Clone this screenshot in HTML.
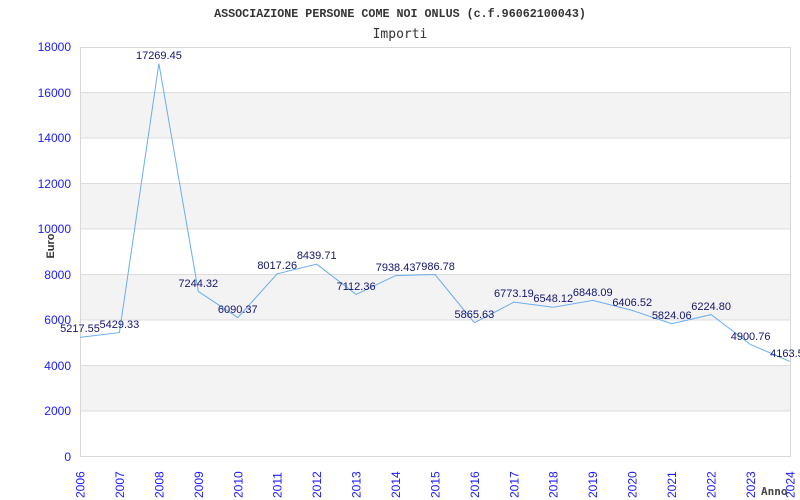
<!DOCTYPE html>
<html><head><meta charset="utf-8"><style>
html,body{margin:0;padding:0;background:#fff;width:800px;height:500px;overflow:hidden}
svg{display:block}
</style></head><body>
<svg width="800" height="500" xmlns="http://www.w3.org/2000/svg">
<rect width="800" height="500" fill="#fff"/>
<text x="400" y="17" text-anchor="middle" font-family="Liberation Mono, monospace" font-weight="bold" font-size="11.7" fill="#333">ASSOCIAZIONE PERSONE COME NOI ONLUS (c.f.96062100043)</text>
<text x="400" y="38" text-anchor="middle" font-family="DejaVu Sans Mono, monospace" font-size="13" fill="#333">Importi</text>
<g fill="#f3f3f3">
<rect x="80" y="92.4" width="710" height="45.5"/>
<rect x="80" y="183.3" width="710" height="45.5"/>
<rect x="80" y="274.2" width="710" height="45.5"/>
<rect x="80" y="365.1" width="710" height="45.5"/>
</g>
<g stroke="#ddd" stroke-width="1">
<line x1="80" y1="92.5" x2="790" y2="92.5"/><line x1="80" y1="138" x2="790" y2="138"/>
<line x1="80" y1="183.5" x2="790" y2="183.5"/><line x1="80" y1="229" x2="790" y2="229"/>
<line x1="80" y1="274.5" x2="790" y2="274.5"/><line x1="80" y1="320" x2="790" y2="320"/>
<line x1="80" y1="365.5" x2="790" y2="365.5"/><line x1="80" y1="411" x2="790" y2="411"/>
</g>
<rect x="80.5" y="47.5" width="710" height="409" fill="none" stroke="#d8d8d8"/>
<g font-family="Liberation Sans, sans-serif" font-size="12" fill="#1a1aff" text-anchor="end">
<text x="71" y="51">18000</text><text x="71" y="97">16000</text><text x="71" y="142">14000</text>
<text x="71" y="188">12000</text><text x="71" y="233">10000</text><text x="71" y="279">8000</text>
<text x="71" y="324">6000</text><text x="71" y="370">4000</text><text x="71" y="415">2000</text>
<text x="71" y="461">0</text>
</g>
<text transform="translate(54,246) rotate(-90)" text-anchor="middle" font-family="Liberation Sans, sans-serif" font-weight="bold" font-size="11" fill="#333">Euro</text>
<g font-family="Liberation Sans, sans-serif" font-size="12" fill="#1a1aff">
<text transform="translate(84.5,498) rotate(-90)">2006</text>
<text transform="translate(123.9,498) rotate(-90)">2007</text>
<text transform="translate(163.4,498) rotate(-90)">2008</text>
<text transform="translate(202.8,498) rotate(-90)">2009</text>
<text transform="translate(242.3,498) rotate(-90)">2010</text>
<text transform="translate(281.7,498) rotate(-90)">2011</text>
<text transform="translate(321.1,498) rotate(-90)">2012</text>
<text transform="translate(360.6,498) rotate(-90)">2013</text>
<text transform="translate(400,498) rotate(-90)">2014</text>
<text transform="translate(439.4,498) rotate(-90)">2015</text>
<text transform="translate(478.9,498) rotate(-90)">2016</text>
<text transform="translate(518.3,498) rotate(-90)">2017</text>
<text transform="translate(557.7,498) rotate(-90)">2018</text>
<text transform="translate(597.2,498) rotate(-90)">2019</text>
<text transform="translate(636.6,498) rotate(-90)">2020</text>
<text transform="translate(676.1,498) rotate(-90)">2021</text>
<text transform="translate(715.5,498) rotate(-90)">2022</text>
<text transform="translate(754.9,498) rotate(-90)">2023</text>
<text transform="translate(794.4,498) rotate(-90)">2024</text>
</g>
<text x="761" y="495" font-family="DejaVu Sans Mono, monospace" font-weight="bold" font-size="11" fill="#444">Anno</text>
<polyline fill="none" stroke="#6aaef0" stroke-width="1" points="80,337.4 119.4,332.6 158.9,63.6 198.3,291.4 237.8,317.6 277.2,273.8 316.7,264.2 356.1,294.4 395.6,275.6 435,274.5 474.4,322.7 513.9,302.1 553.3,307.2 592.8,300.4 632.2,310.4 671.7,323.7 711.1,314.6 750.6,344.6 790,361.4"/>
<g font-family="Liberation Sans, sans-serif" font-size="11" fill="#14146e" text-anchor="middle">
<text x="80" y="332">5217.55</text>
<text x="119.4" y="328">5429.33</text>
<text x="158.9" y="59">17269.45</text>
<text x="198.3" y="287">7244.32</text>
<text x="237.8" y="313">6090.37</text>
<text x="277.2" y="269">8017.26</text>
<text x="316.7" y="259">8439.71</text>
<text x="356.1" y="290">7112.36</text>
<text x="395.6" y="271">7938.43</text>
<text x="435" y="270">7986.78</text>
<text x="474.4" y="318">5865.63</text>
<text x="513.9" y="297">6773.19</text>
<text x="553.3" y="302">6548.12</text>
<text x="592.8" y="296">6848.09</text>
<text x="632.2" y="306">6406.52</text>
<text x="671.7" y="319">5824.06</text>
<text x="711.1" y="310">6224.80</text>
<text x="750.6" y="340">4900.76</text>
<text x="790" y="357">4163.50</text>
</g>
</svg>
</body></html>
